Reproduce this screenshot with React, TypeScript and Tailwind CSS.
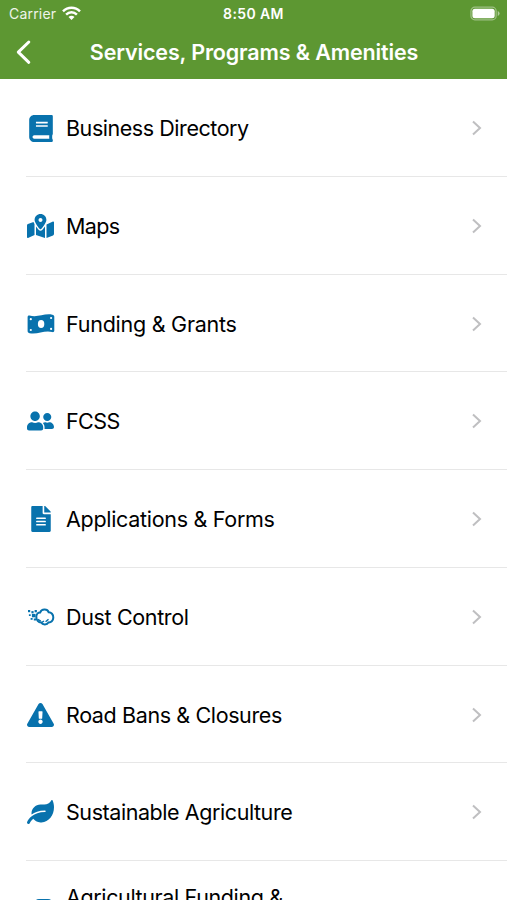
import type { ReactNode } from "react";
import { FaBook, FaMapMarkedAlt, FaUserFriends, FaFileAlt, FaExclamationTriangle, FaLeaf } from "react-icons/fa";

function MoneyIcon() {
  return (
    <svg className="mt-px" width="28" height="20" viewBox="0 0 28 20">
      <path d="M.6 3C.6 1.9 1.3 1.3 2.5 1.5C10.5 4 17-.9 25.3 .7C26.7 .9 27.3 1.5 27.3 2.7V16.5C27.3 17.7 26.4 18.4 25.2 18.1C17.6 15.9 10.6 20.8 2.5 19.2C1.2 18.9 .6 18.3 .6 17.1Z" fill="#0872ad" />
      <ellipse cx="14.1" cy="10" rx="3.2" ry="4" fill="white" />
      <circle cx="3.8" cy="5.2" r="1.1" fill="white" />
      <circle cx="24.1" cy="4" r="1.1" fill="white" />
      <circle cx="3.8" cy="16" r="1.1" fill="white" />
      <circle cx="24.1" cy="14.9" r="1.1" fill="white" />
    </svg>
  );
}

function DustIcon() {
  return (
    <svg width="28" height="20" viewBox="0 0 28 20" fill="none" stroke="#0872ad">
      <path d="M9.3 9.4C9.5 6.8 11.3 5.2 13.2 5.4C14.5 2 20.2 1.4 21.6 5.2C24.2 5.1 26.5 7.6 26.3 10.6C26.2 13.8 24 15.6 21.5 15.4C20.2 18 15.6 18.1 14.2 15.6C11.6 15.8 9.1 12.9 9.3 9.4Z" strokeWidth="2" />
      <path d="M10.8 12.3L13.8 14.2M18.6 14.8L21.5 12.3M15 15.4L17 14" strokeWidth="1.4" />
      <g fill="#0872ad" stroke="none">
        <rect x="1" y="3" width="2.2" height="2.2" />
        <rect x="4.4" y="4.1" width="2.2" height="2.2" />
        <rect x="7.6" y="3" width="2.3" height="2.3" />
        <rect x="1.9" y="7.3" width="1.8" height="1.7" />
        <rect x="4.9" y="6.9" width="3.6" height="3.4" />
        <rect x="3.6" y="11" width="2" height="1.8" />
        <rect x="6.8" y="11.5" width="2.4" height="2" />
      </g>
    </svg>
  );
}

const rows: { label: string; icon: ReactNode; tracking: string }[] = [
  { label: "Business Directory", icon: <FaBook className="h-[27px] w-[24px]" />, tracking: "tracking-[-0.45px]" },
  { label: "Maps", icon: <FaMapMarkedAlt className="h-[24px] w-[27px]" />, tracking: "tracking-[-0.6px]" },
  { label: "Funding & Grants", icon: <MoneyIcon />, tracking: "tracking-[-0.25px]" },
  { label: "FCSS", icon: <FaUserFriends className="h-[22px] w-[27px]" />, tracking: "tracking-[-0.6px]" },
  { label: "Applications & Forms", icon: <FaFileAlt className="h-[26px] w-[20px]" />, tracking: "tracking-[-0.3px]" },
  { label: "Dust Control", icon: <DustIcon />, tracking: "tracking-[-0.35px]" },
  { label: "Road Bans & Closures", icon: <FaExclamationTriangle className="h-[24px] w-[27px]" />, tracking: "tracking-[-0.38px]" },
  { label: "Sustainable Agriculture", icon: <FaLeaf className="h-[24px] w-[27px]" />, tracking: "tracking-[-0.43px]" },
];

export default function App() {
  return (
    <div className="flex h-[900px] w-[507px] flex-col overflow-hidden bg-white font-['Inter',sans-serif] text-black">
      <header className="h-[79px] shrink-0 bg-[#5d9732] text-white">
        <div className="grid h-[27px] grid-cols-3 items-center pl-[9px] pr-[7px]">
          <div className="flex items-center gap-[6px] text-[14px] text-white/90">
            <span className="tracking-[0.2px]">Carrier</span>
            <svg width="19" height="15" viewBox="0 0 19 15" fill="none" stroke="white" strokeWidth="2.5">
              <path d="M1 5.4C5.8.6 13.2.6 18 5.4M4.1 8.6C7.2 5.6 11.8 5.6 14.9 8.6" />
              <path d="M6.5 10.9C8.2 9.3 10.8 9.3 12.5 10.9L9.5 14Z" fill="white" stroke="none" />
            </svg>
          </div>
          <span className="pr-[2px] text-center text-[14px] font-semibold leading-[19px] tracking-[0.4px]">8:50 AM</span>
          <svg className="justify-self-end" width="30" height="15" viewBox="0 0 31 15">
            <rect x="1" y="1" width="26" height="13" rx="4" fill="none" stroke="white" strokeOpacity=".4" strokeWidth="1.3" />
            <rect x="2.5" y="2.7" width="23" height="9.6" rx="2.6" fill="white" />
            <path d="M28.7 5V10Q30.6 9.3 30.6 7.5T28.7 5Z" fill="white" fillOpacity=".5" />
          </svg>
        </div>
        <div className="grid h-[50px] grid-cols-[50px_1fr_50px] items-center">
          <svg className="ml-[15px]" width="18" height="26" viewBox="0 0 18 26" fill="none" stroke="white" strokeWidth="3" strokeLinecap="round" strokeLinejoin="round">
            <path d="M13.8 3L3.3 13.2L13.8 23.3" />
          </svg>
          <h1 className="whitespace-nowrap pl-px pt-px text-center text-[21.5px] font-semibold tracking-[-0.13px]">Services, Programs &amp; Amenities</h1>
        </div>
      </header>
      <main className="flex flex-col">
        {rows.map((row) => (
          <div key={row.label} className="ml-[26px] flex h-[97.75px] shrink-0 items-center border-b border-[#e7e7e7] pr-[24px] pt-[1.5px]">
            <div className="flex w-[29px] items-center justify-center text-[#0872ad]">{row.icon}</div>
            <span className={`ml-[11px] flex-1 whitespace-nowrap text-[21.5px] ${row.tracking}`}>{row.label}</span>
            <svg width="12" height="16" viewBox="0 0 12 16" fill="none" stroke="#bfbfc1" strokeWidth="2">
              <path d="M2 1.5L9 8L2 14.5" />
            </svg>
          </div>
        ))}
        <div className="ml-[26px] flex items-start pt-[23px]">
          <div className="ml-[9px] mt-[15px] h-[14px] w-[17px] rounded-sm bg-[#0872ad]" />
          <span className="ml-[14px] whitespace-nowrap text-[21.5px] leading-[27px] tracking-[-0.37px]">Agricultural Funding &amp;</span>
        </div>
      </main>
    </div>
  );
}
